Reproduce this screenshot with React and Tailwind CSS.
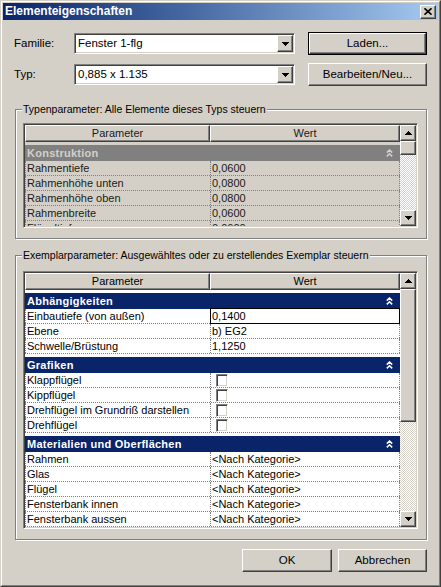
import React from "react";

const raised =
  "border border-t-white border-l-white border-r-[#404040] border-b-[#404040] shadow-[inset_-1px_-1px_0_#808080]";
const sunken =
  "border border-t-[#808080] border-l-[#808080] border-r-white border-b-white shadow-[inset_1px_1px_0_#404040,inset_-1px_-1px_0_#d4d0c8]";
const dither =
  "bg-[image:repeating-conic-gradient(#ffffff_0_25%,#d4d0c8_0_50%)] bg-[length:2px_2px]";

function TriDown() {
  return (
    <svg width="7" height="4" viewBox="0 0 7 4" shapeRendering="crispEdges">
      <path d="M0 0h7v1h-1v1h-1v1h-1v1h-1v-1h-1v-1h-1v-1h-1z" fill="#000" />
    </svg>
  );
}
function TriUp() {
  return (
    <svg width="7" height="4" viewBox="0 0 7 4" shapeRendering="crispEdges">
      <path d="M3 0h1v1h1v1h1v1h1v1h-7v-1h1v-1h1v-1h1z" fill="#000" />
    </svg>
  );
}

function Chevrons({ color }) {
  return (
    <svg width="7" height="8" viewBox="0 0 7 8">
      <path d="M0.8 3.6 L3.5 1 L6.2 3.6 M0.8 7.4 L3.5 4.8 L6.2 7.4" fill="none" stroke={color} strokeWidth="1.5" />
    </svg>
  );
}

function Combo({ value }) {
  return (
    <div className={`w-[221px] h-[21px] bg-white p-[1px] flex items-center ${sunken}`}>
      <span className="pl-[2px] flex-1 text-[11.5px] leading-[17px]">{value}</span>
      <div className={`w-[16px] h-[17px] bg-[#d4d0c8] flex items-center justify-center ${raised}`}>
        <TriDown />
      </div>
    </div>
  );
}

function Button({ children, w, def }) {
  if (def) {
    return (
      <div className={`${w} h-[23px] border border-black`}>
        <div className={`w-full h-full flex items-center justify-center text-[11.5px] ${raised}`}>{children}</div>
      </div>
    );
  }
  return (
    <div className={`${w} h-[23px] flex items-center justify-center text-[11.5px] ${raised}`}>{children}</div>
  );
}

function GroupBox({ label, children, h, pt }) {
  return (
    <div
      className={`relative ml-[1px] ${h} ${pt} pl-[7px] pr-[7px] border border-[#808080] shadow-[inset_1px_1px_0_#ffffff,1px_1px_0_#ffffff]`}
    >
      <span className="absolute left-[6px] -top-[7px] px-[1px] bg-[#d4d0c8] text-[10.5px] leading-[13px] whitespace-nowrap">
        {label}
      </span>
      {children}
    </div>
  );
}

function Scrollbar({ thumb }) {
  return (
    <div className="w-[16px] h-full flex flex-col shrink-0">
      <div className={`h-[16px] shrink-0 bg-[#d4d0c8] flex items-center justify-center ${raised}`}>
        <TriUp />
      </div>
      <div className={`${thumb} shrink-0 bg-[#d4d0c8] ${raised}`} />
      <div className={`flex-1 ${dither}`} />
      <div className={`h-[16px] shrink-0 bg-[#d4d0c8] flex items-center justify-center ${raised}`}>
        <TriDown />
      </div>
    </div>
  );
}

function Checkbox() {
  return <div className={`w-[12px] h-[13px] ml-[4px] mt-[1px] bg-white ${sunken}`} />;
}

function Row({ name, value, kind, selected }) {
  return (
    <div className="flex h-[15px] shrink-0 border-b border-dotted border-[#808080]">
      <div className="w-[185px] shrink-0 border-l border-dotted border-[#808080] pl-[1px] leading-[14px] whitespace-nowrap overflow-hidden">
        {name}
      </div>
      {selected ? (
        <div className="w-[190px] shrink-0 -mt-[1px] h-[16px] border border-black bg-white pl-[1px] leading-[14px]">
          {value}
        </div>
      ) : (
        <div className="w-[190px] shrink-0 border-l border-r border-dotted border-[#808080] pl-[1px] leading-[14px] whitespace-nowrap">
          {kind === "check" ? <Checkbox /> : value}
        </div>
      )}
    </div>
  );
}

function GroupRow({ title, disabled, mt }) {
  return (
    <div
      className={`${mt} h-[16px] shrink-0 flex items-center justify-between pl-[2px] pr-[7px] ${
        disabled ? "bg-[#808080] text-[#d4d0c8]" : "bg-[#0a246a] text-white"
      }`}
    >
      <span className="font-bold text-[11px] tracking-[0.25px] leading-[14px]">{title}</span>
      <Chevrons color={disabled ? "#d4d0c8" : "#ffffff"} />
    </div>
  );
}

function Header() {
  const cell =
    "h-[17px] shrink-0 flex items-center justify-center bg-[#d4d0c8] border-t border-l border-t-white border-l-white border-r border-b border-r-[#404040] border-b-[#404040] shadow-[inset_-1px_-1px_0_#808080] text-[11px]";
  return (
    <div className="flex shrink-0">
      <div className={`w-[185px] ${cell}`}>Parameter</div>
      <div className={`w-[190px] ${cell}`}>Wert</div>
    </div>
  );
}

function Table({ h, thumb, disabled, children }) {
  return (
    <div className={`${h} w-[395px] p-[1px] ${sunken}`}>
      <div className="flex h-full">
        <div
          className={`w-[375px] h-full flex flex-col overflow-hidden ${
            disabled ? "bg-[#d4d0c8] text-[#1a1a1a]" : "bg-white text-black"
          }`}
        >
          <Header />
          {children}
        </div>
        <Scrollbar thumb={thumb} />
      </div>
    </div>
  );
}

export default function App() {
  return (
    <div className="w-[441px] h-[587px] bg-[#d4d0c8] font-['Liberation_Sans',Arial,sans-serif] text-[11px] text-black border border-t-[#d4d0c8] border-l-[#d4d0c8] border-r-[#404040] border-b-[#404040]">
      <div className="h-full border border-t-white border-l-white border-r-[#808080] border-b-[#808080] p-[1px] flex flex-col">
        {/* Title bar */}
        <div className="h-[17px] shrink-0 flex items-center justify-between bg-gradient-to-r from-[#0a246a] to-[#a6caf0] pl-[2px] pr-[2px]">
          <span className="text-white font-bold text-[12px] leading-[15px]">Elementeigenschaften</span>
          <div className={`w-[16px] h-[14px] bg-[#d4d0c8] flex items-center justify-center ${raised}`}>
            <svg width="8" height="7" viewBox="0 0 8 7">
              <path d="M0.5 0.3 L7.5 6.7 M7.5 0.3 L0.5 6.7" stroke="#000" strokeWidth="1.6" fill="none" />
            </svg>
          </div>
        </div>

        <div className="flex flex-col px-[11px]">
          {/* Familie */}
          <div className="mt-[12px] h-[23px] flex items-center">
            <span className="w-[60px] text-[11.5px]">Familie:</span>
            <Combo value="Fenster 1-flg" />
            <div className="ml-[13px]">
              <Button w="w-[119px]" def>
                Laden...
              </Button>
            </div>
          </div>
          {/* Typ */}
          <div className="mt-[8px] h-[23px] flex items-center">
            <span className="w-[60px] text-[11.5px]">Typ:</span>
            <Combo value="0,885 x 1.135" />
            <div className="ml-[13px]">
              <Button w="w-[119px]">Bearbeiten/Neu...</Button>
            </div>
          </div>

          {/* Typenparameter */}
          <div className="mt-[23px]">
            <GroupBox label="Typenparameter: Alle Elemente dieses Typs steuern" h="h-[130px]" pt="pt-[13px]">
              <Table h="h-[105px]" thumb="h-[14px]" disabled>
                <GroupRow title="Konstruktion" disabled mt="mt-[3px]" />
                <Row name="Rahmentiefe" value="0,0600" />
                <Row name="Rahmenhöhe unten" value="0,0800" />
                <Row name="Rahmenhöhe oben" value="0,0800" />
                <Row name="Rahmenbreite" value="0,0600" />
                <Row name="Flügeltiefe" value="0,0600" />
              </Table>
            </GroupBox>
          </div>

          {/* Exemplarparameter */}
          <div className="mt-[16px]">
            <GroupBox
              label="Exemplarparameter: Ausgewähltes oder zu erstellendes Exemplar steuern"
              h="h-[285px]"
              pt="pt-[15px]"
            >
              <Table h="h-[258px]" thumb="h-[133px]">
                <GroupRow title="Abhängigkeiten" mt="mt-[3px]" />
                <Row name="Einbautiefe (von außen)" value="0,1400" selected />
                <Row name="Ebene" value="b) EG2" />
                <Row name="Schwelle/Brüstung" value="1,1250" />
                <GroupRow title="Grafiken" mt="mt-[3px]" />
                <Row name="Klappflügel" kind="check" />
                <Row name="Kippflügel" kind="check" />
                <Row name="Drehflügel im Grundriß darstellen" kind="check" />
                <Row name="Drehflügel" kind="check" />
                <GroupRow title="Materialien und Oberflächen" mt="mt-[3px]" />
                <Row name="Rahmen" value="<Nach Kategorie>" />
                <Row name="Glas" value="<Nach Kategorie>" />
                <Row name="Flügel" value="<Nach Kategorie>" />
                <Row name="Fensterbank innen" value="<Nach Kategorie>" />
                <Row name="Fensterbank aussen" value="<Nach Kategorie>" />
              </Table>
            </GroupBox>
          </div>

          {/* Buttons */}
          <div className="mt-[9px] flex justify-end gap-[6px]">
            <Button w="w-[90px]">OK</Button>
            <Button w="w-[89px]">Abbrechen</Button>
          </div>
        </div>
      </div>
    </div>
  );
}
